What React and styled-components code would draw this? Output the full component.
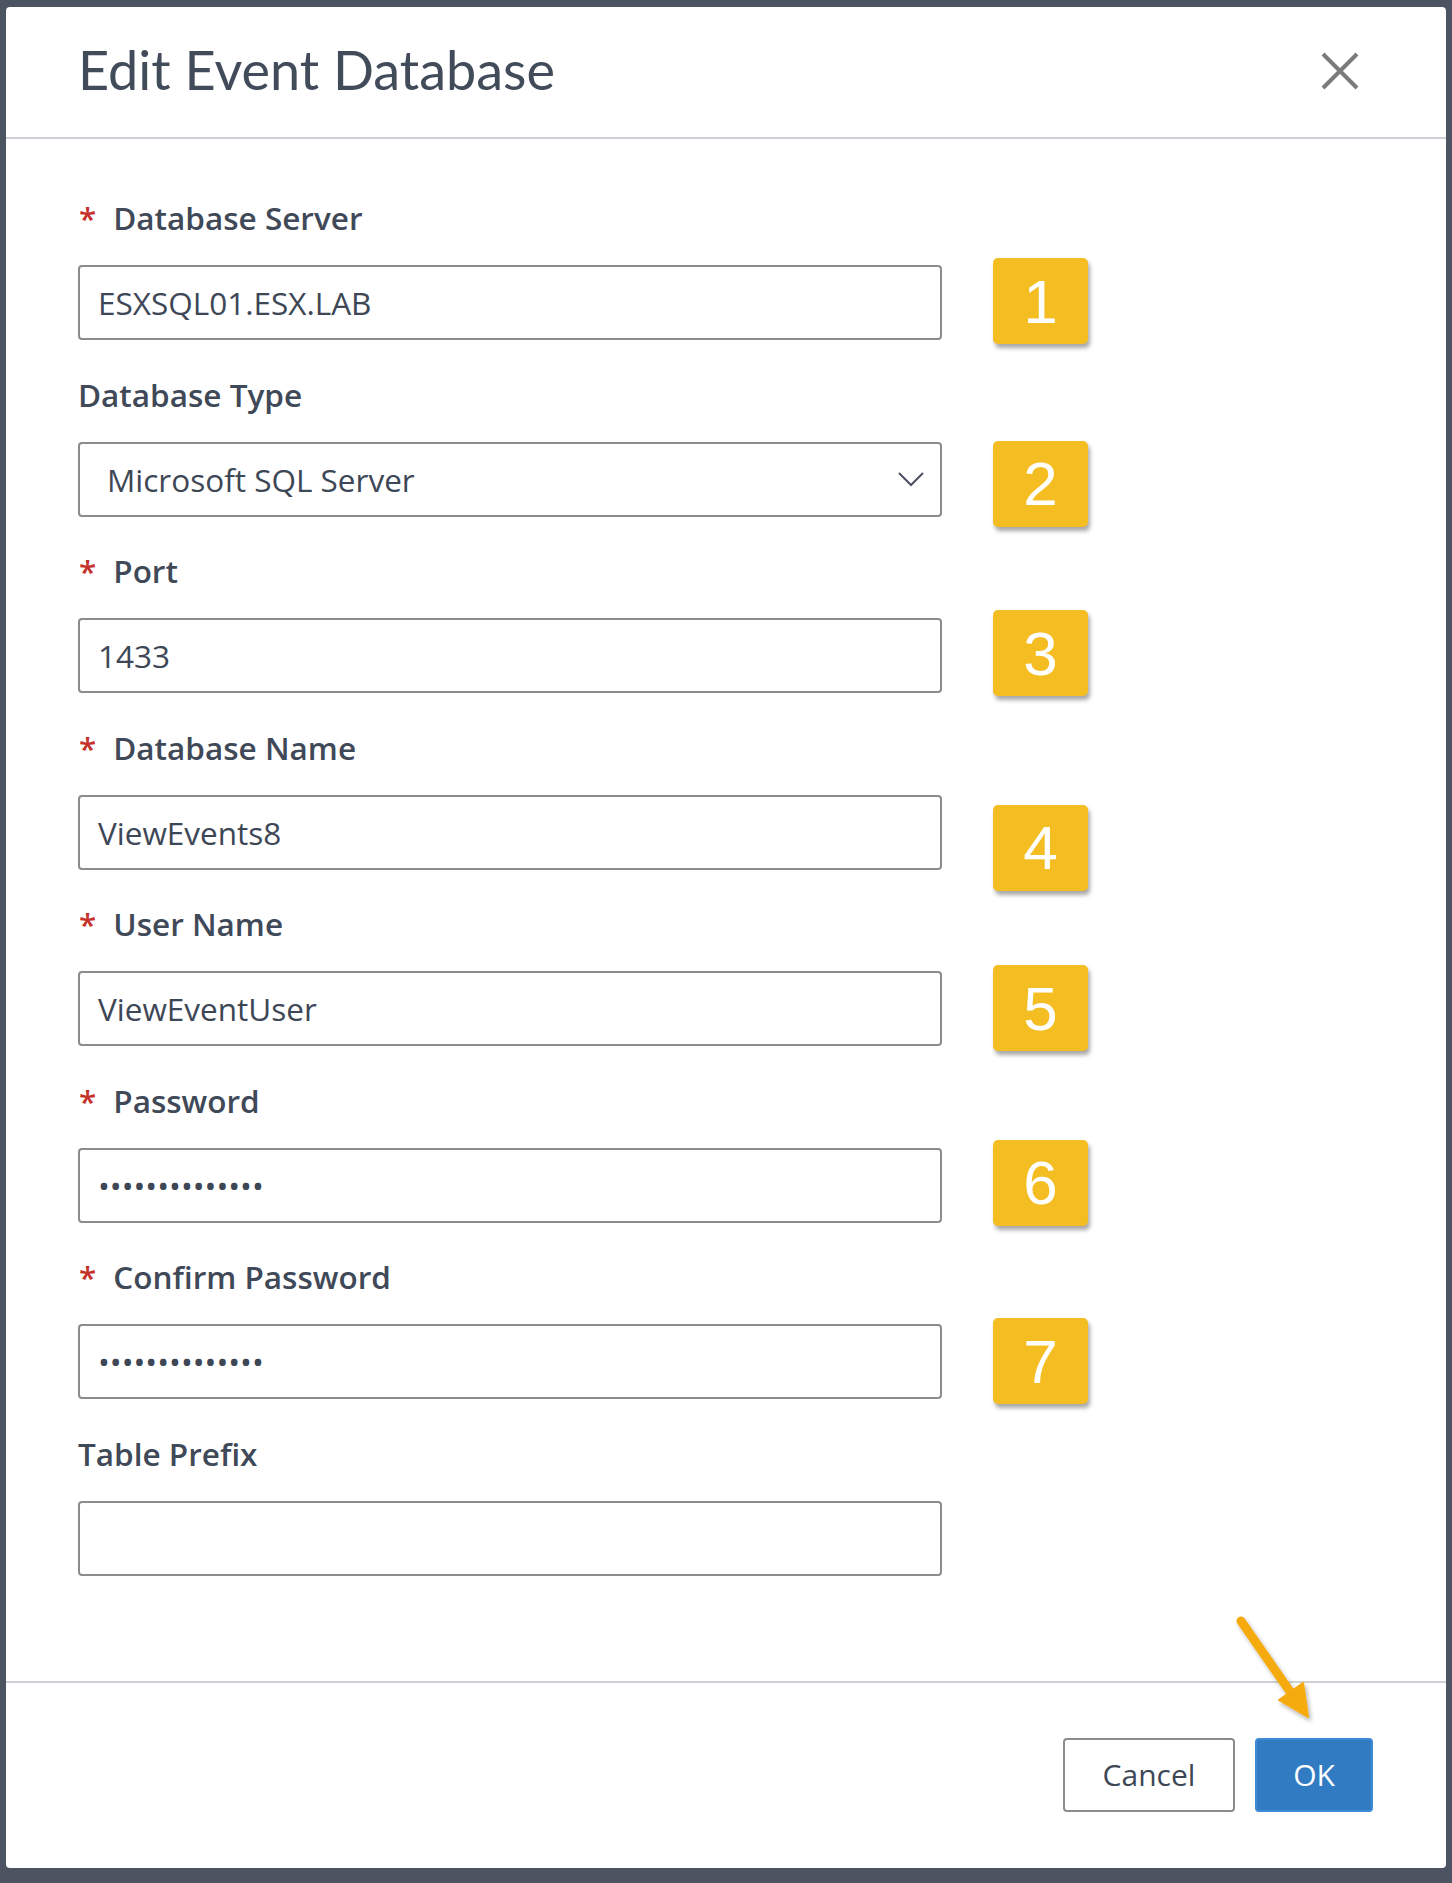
import React from "react";
import styled, { createGlobalStyle } from "styled-components";

const fields = [
  { label: "Database Server", required: true, value: "ESXSQL01.ESX.LAB", badge: 1, shift: -7 },
  { label: "Database Type", select: true, value: "Microsoft SQL Server", badge: 2, shift: -1 },
  { label: "Port", required: true, value: "1433", badge: 3, shift: -8 },
  { label: "Database Name", required: true, value: "ViewEvents8", badge: 4, shift: 10 },
  { label: "User Name", required: true, value: "ViewEventUser", badge: 5, shift: -6 },
  { label: "Password", required: true, value: "••••••••••••••", badge: 6, shift: -8 },
  { label: "Confirm Password", required: true, value: "••••••••••••••", badge: 7, shift: -6 },
  { label: "Table Prefix", value: "" },
];

function App() {
  return (
    <>
      <GlobalStyle />
      <Page>
        <Modal>
          <Header>
            <Title>Edit Event Database</Title>
            <Close aria-label="close">
              <svg width="38" height="38" viewBox="0 0 38 38">
                <path d="M2 2 L36 36 M36 2 L2 36" stroke="#7b7b7b" strokeWidth="4" fill="none" />
              </svg>
            </Close>
          </Header>
          <Body>
            {fields.map((f) => (
              <Field key={f.label}>
                <Label>
                  {f.required && <Star>*</Star>}
                  {f.label}
                </Label>
                <Row>
                  <Input $select={f.select}>
                    <span>{f.value}</span>
                    {f.select && (
                      <svg width="26" height="16" viewBox="0 0 26 16">
                        <path d="M1 2 L13 14 L25 2" stroke="#4a5160" strokeWidth="2" fill="none" />
                      </svg>
                    )}
                  </Input>
                  {f.badge && <Badge $shift={f.shift}>{f.badge}</Badge>}
                </Row>
              </Field>
            ))}
          </Body>
          <Footer>
            <CancelButton>Cancel</CancelButton>
            <OkButton>OK</OkButton>
          </Footer>
          <Arrow width="110" height="120" viewBox="0 0 110 120">
            <defs>
              <filter id="shadow" x="-30%" y="-30%" width="160%" height="160%">
                <feDropShadow dx="2" dy="3" stdDeviation="2" floodColor="#000" floodOpacity="0.3" />
              </filter>
            </defs>
            <g filter="url(#shadow)" fill="#f5ab0c" stroke="#f5ab0c">
              <path d="M20 14 L70 86" strokeWidth="9" strokeLinecap="round" fill="none" />
              <path d="M58 93 L82 76 L87 110 Z" strokeWidth="2" strokeLinejoin="round" />
            </g>
          </Arrow>
        </Modal>
      </Page>
    </>
  );
}

export default App;

const GlobalStyle = createGlobalStyle`
  body {
    margin: 0;
    background: #4c5361;
  }
`;
const Page = styled.div`
  padding: 7px 6px 15px 6px;
`;
const Modal = styled.div`
  position: relative;
  background: #ffffff;
  border-radius: 4px;
`;
const Header = styled.div`
  height: 130px;
  display: flex;
  justify-content: space-between;
  align-items: center;
  padding: 0 87px 0 72px;
  border-bottom: 2px solid #cdd1d5;
`;
const Title = styled.h1`
  margin: 0 0 6px 0;
  font-family: Lato, "Open Sans", sans-serif;
  font-weight: 400;
  font-size: 54px;
  color: #414b5a;
`;
const Close = styled.div`
  width: 38px;
  height: 38px;
  display: flex;
  margin-bottom: 2px;
`;
const Body = styled.div`
  padding: 63px 0 105px 72px;
  display: flex;
  flex-direction: column;
  gap: 38.57px;
`;
const Field = styled.div`
  display: flex;
  flex-direction: column;
`;
const Label = styled.div`
  font-family: "Open Sans", sans-serif;
  font-weight: 600;
  font-size: 31.5px;
  line-height: 32px;
  color: #3f4958;
  margin-bottom: 31px;
`;
const Star = styled.span`
  color: #c5312b;
  margin-right: 17px;
  margin-left: 1px;
`;
const Row = styled.div`
  display: flex;
  height: 75px;
`;
const Input = styled.div`
  box-sizing: border-box;
  width: 864px;
  height: 75px;
  border: 2px solid #8c8c8c;
  border-radius: 4px;
  display: flex;
  align-items: center;
  justify-content: space-between;
  padding: 0 16px 0 ${(p) => (p.$select ? "27px" : "18px")};
  font-family: "Open Sans", sans-serif;
  font-size: 31.5px;
  color: #3d4756;
`;
const Badge = styled.div`
  box-sizing: border-box;
  width: 95px;
  height: 86px;
  margin-left: 51px;
  margin-top: ${(p) => p.$shift}px;
  background: #f4bd22;
  border-radius: 5px;
  box-shadow: 2px 4px 4px rgba(0, 0, 0, 0.35);
  display: flex;
  align-items: center;
  justify-content: center;
  font-family: "Liberation Sans", Arial, sans-serif;
  font-size: 62px;
  color: #ffffff;
`;
const Footer = styled.div`
  border-top: 2px solid #cdd1d5;
  padding: 55px 73px 56px;
  display: flex;
  justify-content: flex-end;
  gap: 20px;
`;
const CancelButton = styled.div`
  box-sizing: border-box;
  width: 172px;
  height: 74px;
  border: 2px solid #8c8c8c;
  border-radius: 4px;
  background: #ffffff;
  display: flex;
  align-items: center;
  justify-content: center;
  font-family: "Open Sans", sans-serif;
  font-size: 30px;
  color: #3d4756;
`;
const OkButton = styled(CancelButton)`
  width: 118px;
  background: #317bc3;
  border-color: #3d8ad6;
  color: #ffffff;
`;
const Arrow = styled.svg`
  position: absolute;
  left: 1215px;
  top: 1600px;
  overflow: visible;
`;
